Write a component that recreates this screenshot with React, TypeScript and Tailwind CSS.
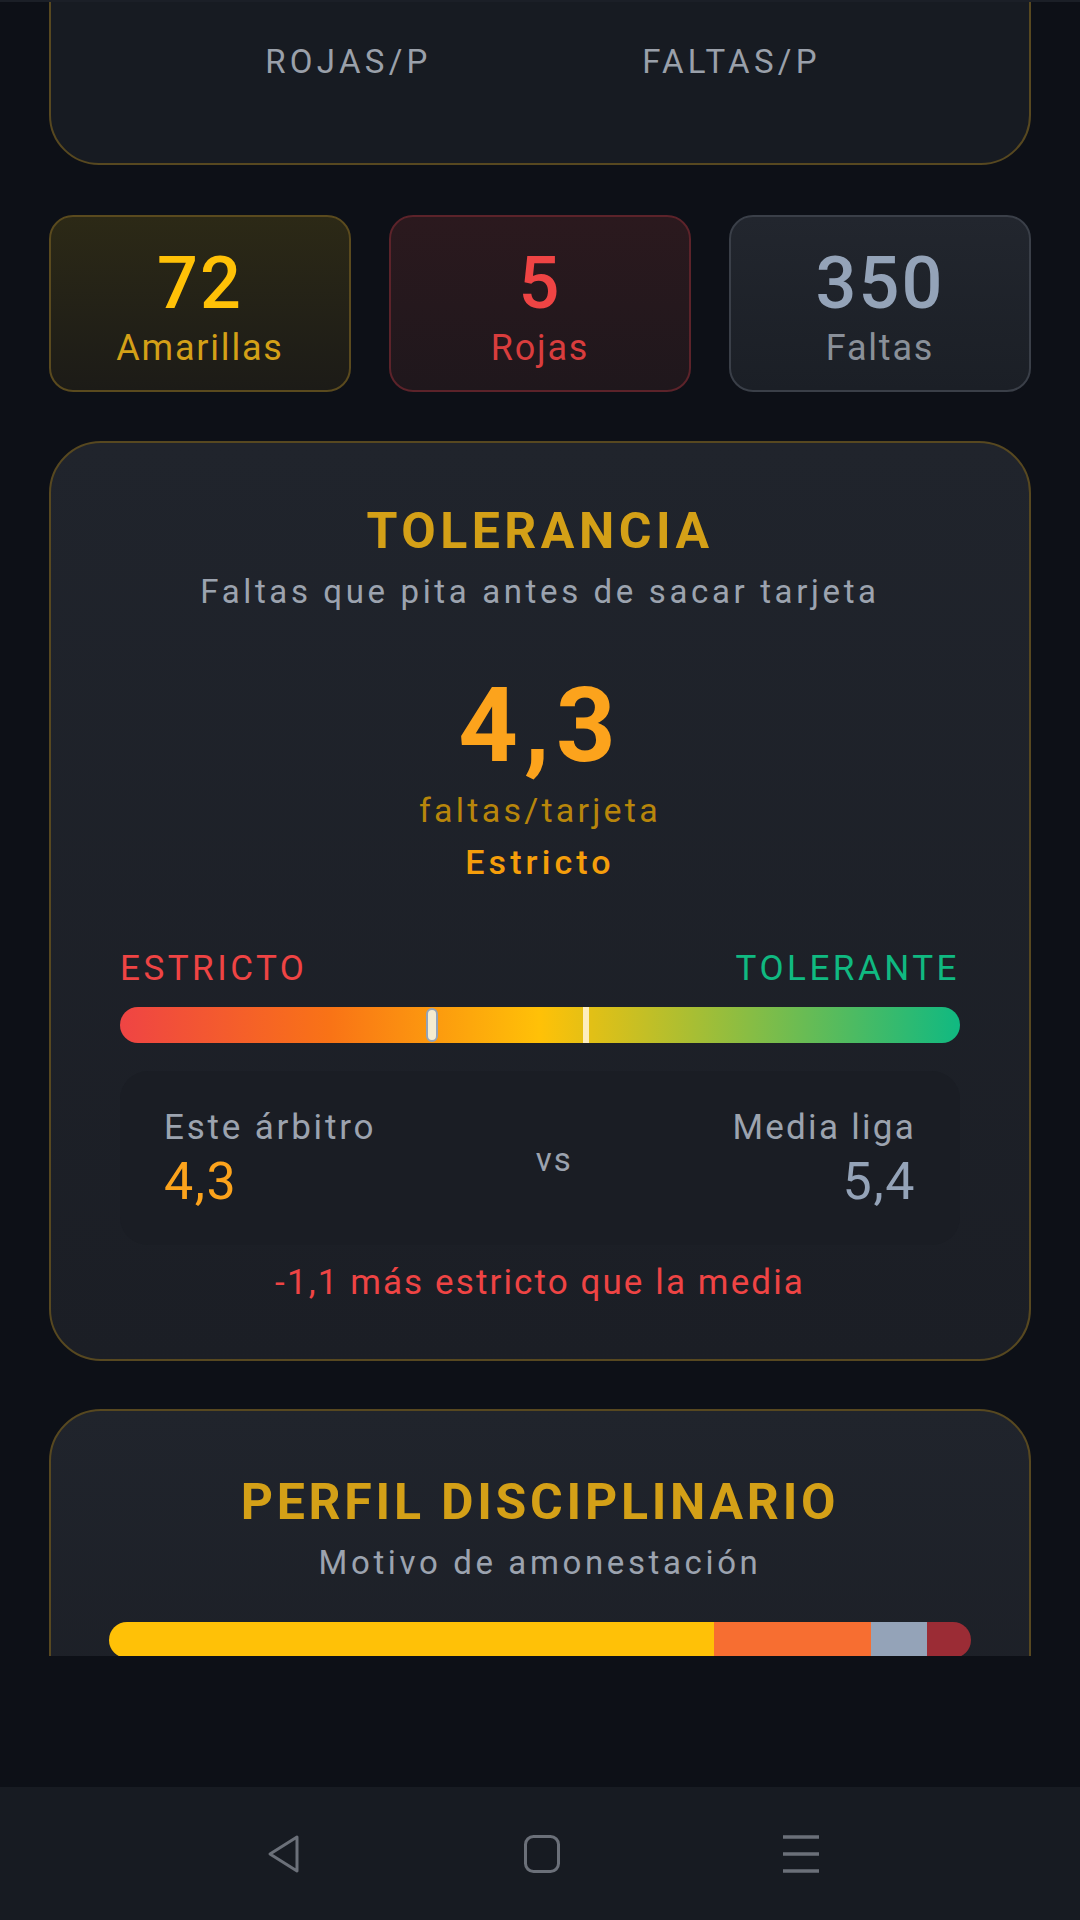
const GOLD_BORDER = "border-2 border-[#574820]";

const STATS = [
  {
    value: "72",
    label: "Amarillas",
    box: "border-[#5a4a1e] bg-gradient-to-b from-[#2c2916] to-[#1c1b17]",
    valueClass: "text-[#ffc107]",
    labelClass: "text-[#d4a017]",
  },
  {
    value: "5",
    label: "Rojas",
    box: "border-[#5c232a] bg-gradient-to-b from-[#2b191e] to-[#1f171c]",
    valueClass: "text-[#ef4444]",
    labelClass: "text-[#d93d3d]",
  },
  {
    value: "350",
    label: "Faltas",
    box: "border-[#3a3f48] bg-gradient-to-b from-[#22262e] to-[#1b1f26]",
    valueClass: "text-[#94a3b8]",
    labelClass: "text-[#8a9099]",
  },
];

const PROFILE = [
  { width: "70.2%", color: "bg-[#ffc107]" },
  { width: "18.2%", color: "bg-[#f76e31]" },
  { width: "6.5%", color: "bg-[#94a3b8]" },
  { width: "5.1%", color: "bg-[#9b2c35]" },
];

export default function App() {
  return (
    <div className="flex h-[1920px] w-[1080px] flex-col overflow-hidden bg-[#0d1017] font-['Roboto','Liberation_Sans',sans-serif]">
      <div className="h-[2px] bg-[#1b1f27]" />

      <div className="h-[1654px] overflow-hidden">
        <div className="-mt-[122px] flex flex-col px-[49px]">
          <PerGameCard />

          <div className="mt-[50px] grid grid-cols-3 gap-[38px]">
            {STATS.map((stat) => (
              <div
                key={stat.label}
                className={`flex h-[177px] flex-col items-center rounded-[24px] border-2 pt-[31px] ${stat.box}`}
              >
                <span
                  className={`text-[72px] font-medium leading-none tracking-[0.03em] ${stat.valueClass}`}
                >
                  {stat.value}
                </span>
                <span
                  className={`mt-[10px] text-[36px] leading-none tracking-[0.05em] ${stat.labelClass}`}
                >
                  {stat.label}
                </span>
              </div>
            ))}
          </div>

          <div className="mt-[49px]">
            <ToleranceCard />
          </div>

          <div className="mt-[48px]">
            <ProfileCard />
          </div>
        </div>
      </div>

      <div className="flex-1" />

      <NavBar />
    </div>
  );
}

function PerGameCard() {
  return (
    <div
      className={`flex h-[285px] flex-col justify-end rounded-[50px] bg-[#171b22] px-[106px] pb-[85px] ${GOLD_BORDER}`}
    >
      <div className="grid grid-cols-2 text-center text-[33px] leading-none tracking-[0.13em] text-[#9aa0aa]">
        <span>ROJAS/P</span>
        <span>FALTAS/P</span>
      </div>
    </div>
  );
}

function CardTitle({
  title,
  subtitle,
  tracking,
}: {
  title: string;
  subtitle: string;
  tracking: string;
}) {
  return (
    <div className="flex flex-col items-center">
      <h2
        className={`text-[50px] font-bold leading-none text-[#d4a017] ${tracking}`}
      >
        {title}
      </h2>
      <p className="mt-[19px] text-[33px] leading-none tracking-[0.11em] text-[#9ca3af]">
        {subtitle}
      </p>
    </div>
  );
}

function ToleranceCard() {
  return (
    <div
      className={`flex flex-col rounded-[52px] bg-gradient-to-b from-[#20242c] to-[#1b1e25] px-[69px] pb-[59px] pt-[63px] ${GOLD_BORDER}`}
    >
      <CardTitle
        title="TOLERANCIA"
        subtitle="Faltas que pita antes de sacar tarjeta"
        tracking="tracking-[0.09em]"
      />

      <div className="mt-[66px] flex flex-col items-center">
        <span className="text-[104px] font-bold leading-none tracking-[0.06em] text-[#fca31c]">
          4,3
        </span>
        <span className="mt-[15px] text-[34px] leading-none tracking-[0.095em] text-[#b8860b]">
          faltas/tarjeta
        </span>
        <span className="mt-[18px] text-[34px] font-medium leading-none tracking-[0.12em] text-[#f59e0b]">
          Estricto
        </span>
      </div>

      <div className="mt-[72px] flex justify-between text-[35px] leading-none tracking-[0.1em]">
        <span className="text-[#ef4444]">ESTRICTO</span>
        <span className="text-[#10b981]">TOLERANTE</span>
      </div>

      <div className="relative mt-[21px] h-[36px] rounded-full bg-[linear-gradient(to_right,#ef4444,#f97316_25%,#ffc107_50%,#10b981)]">
        <div className="absolute left-[55.5%] top-0 h-full w-[6px] -translate-x-1/2 bg-[#fff3d0]/90" />
        <div className="absolute left-[37.1%] top-[1px] h-[34px] w-[12px] -translate-x-1/2 rounded-full border-2 border-[#94a3b8] bg-[#f5ecd0]" />
      </div>

      <div className="mt-[28px] flex items-center justify-between rounded-[28px] bg-[#1a1d24] px-[44px] pb-[37px] pt-[39px]">
        <div className="flex flex-col">
          <span className="text-[35px] leading-none tracking-[0.08em] text-[#9ca3af]">
            Este árbitro
          </span>
          <span className="mt-[11px] text-[52px] leading-none tracking-[0.03em] text-[#fca31c]">
            4,3
          </span>
        </div>

        <span className="text-[33px] leading-none tracking-[0.06em] text-[#9ca3af]">
          vs
        </span>

        <div className="flex flex-col items-end">
          <span className="text-[35px] leading-none tracking-[0.065em] text-[#9ca3af]">
            Media liga
          </span>
          <span className="mt-[11px] text-[52px] leading-none tracking-[0.03em] text-[#94a3b8]">
            5,4
          </span>
        </div>
      </div>

      <p className="mt-[20px] text-center text-[35px] leading-none tracking-[0.06em] text-[#ef4444]">
        -1,1 más estricto que la media
      </p>
    </div>
  );
}

function ProfileCard() {
  return (
    <div
      className={`flex h-[400px] flex-col rounded-[52px] bg-gradient-to-b from-[#20242c] to-[#1b1e25] px-[58px] pt-[66px] ${GOLD_BORDER}`}
    >
      <CardTitle
        title="PERFIL DISCIPLINARIO"
        subtitle="Motivo de amonestación"
        tracking="tracking-[0.075em]"
      />

      <div className="mt-[43px] flex h-[36px] overflow-hidden rounded-full">
        {PROFILE.map((segment) => (
          <div
            key={segment.color}
            className={segment.color}
            style={{ width: segment.width }}
          />
        ))}
      </div>
    </div>
  );
}

function NavBar() {
  return (
    <div className="flex h-[133px] items-center justify-center gap-[219px] bg-[#171b22] pl-[4px] text-[#6b7079]">
      <svg width="40" height="40" viewBox="0 0 40 40" fill="none">
        <path
          d="M34 3 L7 20 L34 37 Z"
          stroke="currentColor"
          strokeWidth="3"
          strokeLinejoin="round"
        />
      </svg>
      <svg width="40" height="40" viewBox="0 0 40 40" fill="none">
        <rect
          x="3.5"
          y="2.5"
          width="33"
          height="35"
          rx="8"
          stroke="currentColor"
          strokeWidth="3"
        />
      </svg>
      <svg width="40" height="40" viewBox="0 0 40 40" fill="none">
        <path
          d="M2 3 H38 M2 20 H38 M2 37 H38"
          stroke="currentColor"
          strokeWidth="3.5"
        />
      </svg>
    </div>
  );
}
